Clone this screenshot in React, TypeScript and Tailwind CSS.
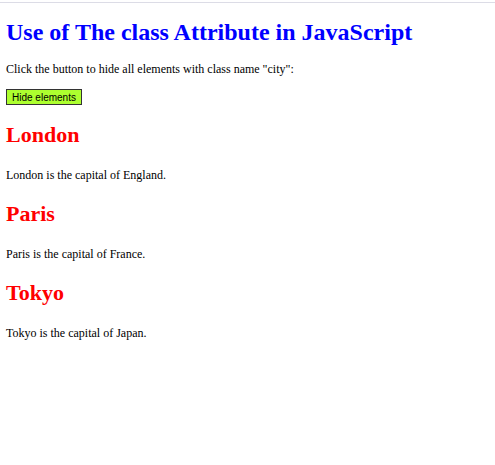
export default function App() {
  const cities = [
    { name: "London", text: "London is the capital of England." },
    { name: "Paris", text: "Paris is the capital of France." },
    { name: "Tokyo", text: "Tokyo is the capital of Japan." },
  ];

  return (
    <div className="min-h-[465px] bg-white font-['Liberation_Serif',serif] text-black">
      <div className="h-[3px] border-b border-[#dcdce6]" />
      <div className="px-[6px]">
        <h1 className="mt-[15px] text-[24px] font-bold leading-[28px] text-[#0000ff]">
          Use of The class Attribute in JavaScript
        </h1>
        <p className="mt-[16px] text-[12px] leading-[14px]">
          Click the button to hide all elements with class name "city":
        </p>
        <button className="mt-[13px] h-[16px] border border-[#333] bg-[#adff2f] px-[5px] font-['Liberation_Sans',sans-serif] text-[10px] leading-[13px]">
          Hide elements
        </button>
        {cities.map((c, i) => (
          <div key={c.name} className={i === 0 ? "mt-[14px]" : "mt-[19px]"}>
            <h2 className="text-[22px] font-bold leading-[26px] text-[#ff0000]">
              {c.name}
            </h2>
            <p className="mt-[20px] text-[12px] leading-[14px]">{c.text}</p>
          </div>
        ))}
      </div>
    </div>
  );
}
